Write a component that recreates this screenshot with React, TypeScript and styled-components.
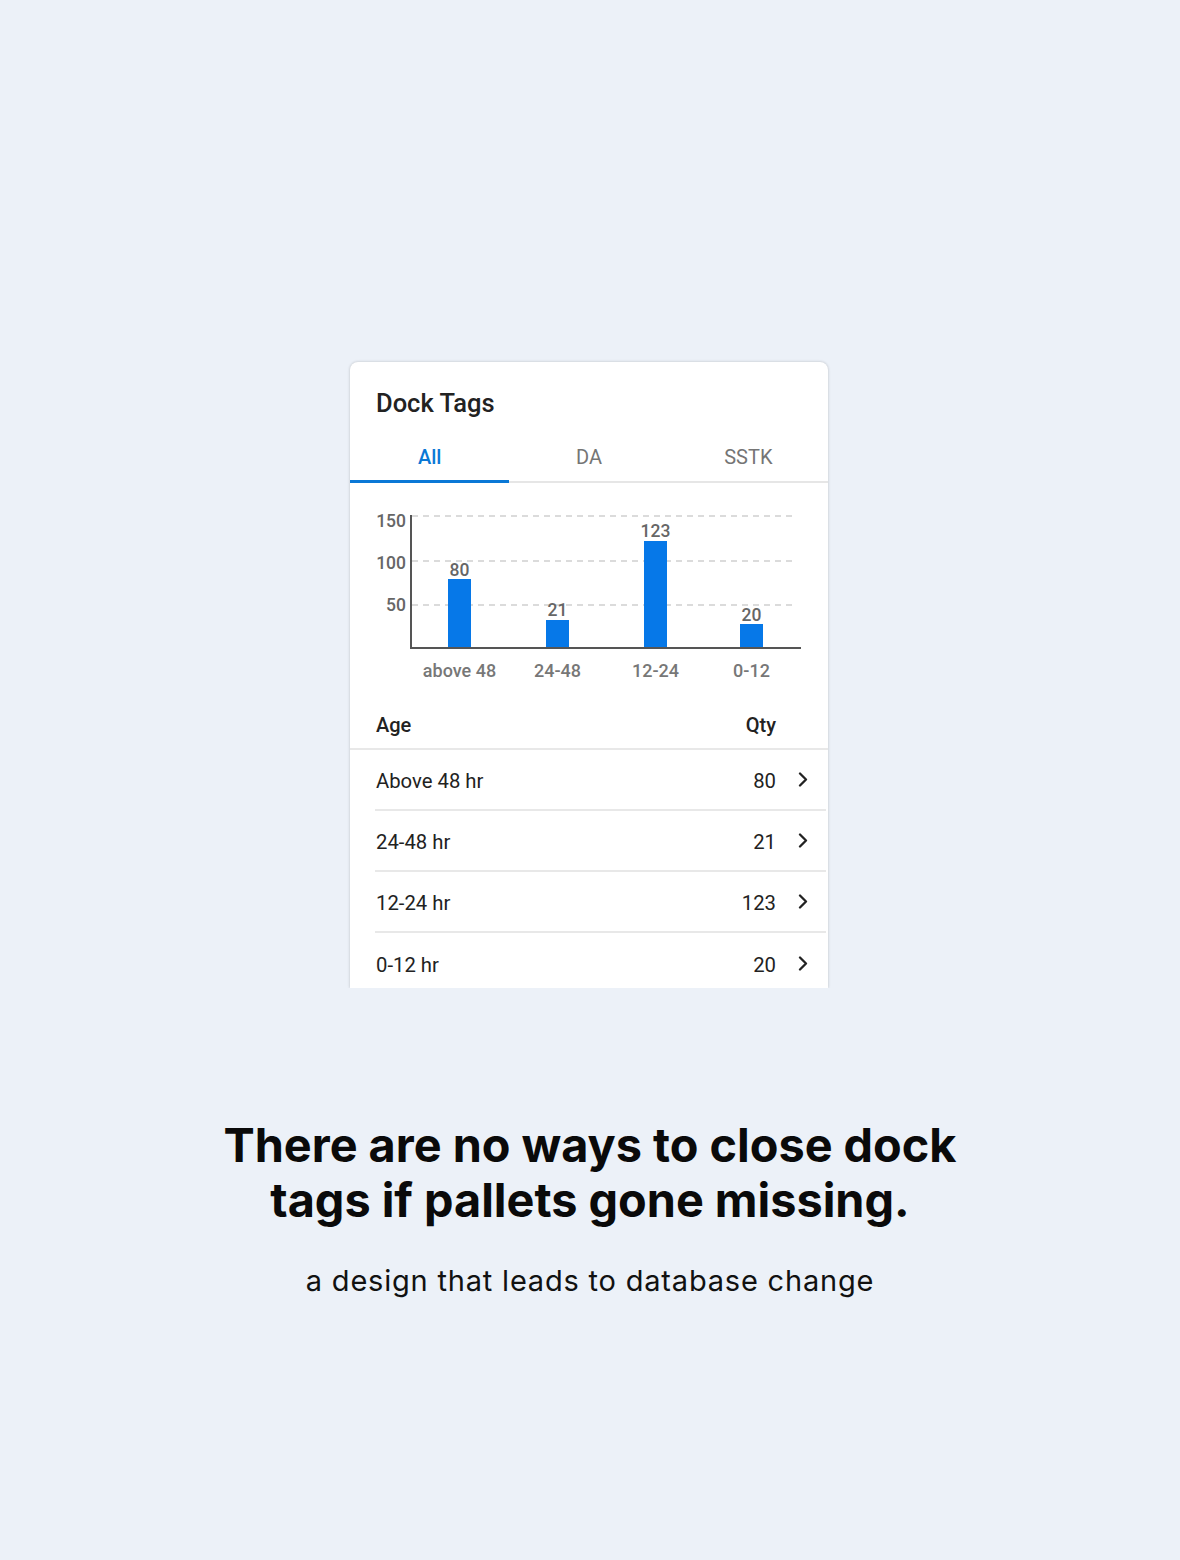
import React from "react";
import styled, { createGlobalStyle } from "styled-components";

const GlobalStyle = createGlobalStyle`
  html, body { margin: 0; padding: 0; }
  body {
    background: #ecf1f8;
    font-family: Roboto, "Liberation Sans", sans-serif;
  }
  * { box-sizing: border-box; }
`;

const Page = styled.main`
  min-height: 1560px;
  display: flex;
  flex-direction: column;
  align-items: center;
  padding-top: 362px;
`;

const Card = styled.section`
  width: 478px;
  height: 626px;
  margin-left: -2px;
  overflow: hidden;
  background: #ffffff;
  border-radius: 8px 8px 0 0;
  box-shadow: 0 0 3px rgba(0, 0, 0, 0.22);
  clip-path: inset(-6px -6px 0 -6px);
  display: flex;
  flex-direction: column;
`;

const Title = styled.h2`
  margin: 0;
  padding: 25px 26px 0;
  font-size: 25.5px;
  line-height: 33px;
  font-weight: 500;
  color: #222222;
`;

const Tabs = styled.nav`
  margin-top: 13px;
  display: grid;
  grid-template-columns: repeat(3, 1fr);
  border-bottom: 2px solid #e6e6e6;
`;

const Tab = styled.div<{ $active?: boolean }>`
  position: relative;
  height: 48px;
  display: flex;
  align-items: center;
  justify-content: center;
  font-size: 20px;
  font-weight: ${(p) => (p.$active ? 500 : 400)};
  color: ${(p) => (p.$active ? "#0a78d6" : "#757575")};
  &::after {
    content: "";
    display: ${(p) => (p.$active ? "block" : "none")};
    position: absolute;
    left: 0;
    right: 0;
    bottom: -2px;
    height: 3px;
    background: #0a78d6;
  }
`;

const ChartSvg = styled.svg`
  display: block;
  flex: none;
  margin-top: 1px;
`;

const TableHead = styled.div`
  flex: none;
  height: 48px;
  display: flex;
  align-items: center;
  justify-content: space-between;
  padding: 0 52px 0 26px;
  border-bottom: 2px solid #e8e8e8;
  font-size: 20px;
  font-weight: 500;
  color: #222222;
`;

const Row = styled.div<{ $last?: boolean }>`
  flex: none;
  height: 61px;
  margin: 0 2px 0 25px;
  padding: 3px 18px 0 1px;
  display: flex;
  align-items: center;
  border-bottom: ${(p) => (p.$last ? "none" : "2px solid #e8e8e8")};
  font-size: 20.3px;
  color: #222222;
`;

const RowLabel = styled.span`
  flex: 1;
`;

const RowQty = styled.span`
  text-align: right;
`;

const Chevron = styled.svg`
  margin-left: 22px;
  margin-top: -3px;
  flex: none;
`;

const Heading = styled.h1`
  margin: 130px 0 0;
  font-family: Inter, "Liberation Sans", sans-serif;
  font-size: 46.8px;
  line-height: 55px;
  font-weight: 700;
  color: #0a0a0a;
  text-align: center;
  letter-spacing: 0;
`;

const Subtitle = styled.p`
  margin: 35px 0 0;
  font-family: Inter, "Liberation Sans", sans-serif;
  font-size: 29px;
  line-height: 36px;
  font-weight: 400;
  color: #111111;
  text-align: center;
  letter-spacing: 0.8px;
`;

const bars = [
  { label: "above 48", value: 80, x: 98, top: 95, valueBase: 92 },
  { label: "24-48", value: 21, x: 196, top: 136, valueBase: 132 },
  { label: "12-24", value: 123, x: 294, top: 57, valueBase: 53 },
  { label: "0-12", value: 20, x: 390, top: 140, valueBase: 137 },
];

const grid = [
  { label: "150", y: 32, base: 43 },
  { label: "100", y: 77, base: 85 },
  { label: "50", y: 121, base: 127 },
];

const rows = [
  { age: "Above 48 hr", qty: 80 },
  { age: "24-48 hr", qty: 21 },
  { age: "12-24 hr", qty: 123 },
  { age: "0-12 hr", qty: 20 },
];

const BAR_W = 23;
const AXIS_Y = 164;

function Chart() {
  return (
    <ChartSvg width={478} height={218} viewBox="0 0 478 218">
      {grid.map((g) => (
        <g key={g.label}>
          <line
            x1={62}
            x2={446}
            y1={g.y}
            y2={g.y}
            stroke="#cfcfcf"
            strokeWidth={1.3}
            strokeDasharray="6 5"
          />
          <text
            x={56}
            y={g.base}
            textAnchor="end"
            fontSize={17.5}
            fontWeight={500}
            fill="#666666"
            fontFamily="Roboto, sans-serif"
          >
            {g.label}
          </text>
        </g>
      ))}
      {bars.map((b) => (
        <g key={b.label}>
          <rect x={b.x} y={b.top} width={BAR_W} height={AXIS_Y - b.top} fill="#0678e8" />
          <text
            x={b.x + BAR_W / 2}
            y={b.valueBase}
            textAnchor="middle"
            fontSize={17.5}
            fontWeight={500}
            fill="#666666"
            fontFamily="Roboto, sans-serif"
          >
            {b.value}
          </text>
          <text
            x={b.x + BAR_W / 2}
            y={193}
            textAnchor="middle"
            fontSize={18}
            fontWeight={500}
            fill="#777777"
            fontFamily="Roboto, sans-serif"
          >
            {b.label}
          </text>
        </g>
      ))}
      <line x1={61} x2={61} y1={31} y2={165} stroke="#555555" strokeWidth={2} />
      <line x1={60} x2={451} y1={AXIS_Y} y2={AXIS_Y} stroke="#555555" strokeWidth={2} />
    </ChartSvg>
  );
}

export default function App() {
  return (
    <>
      <GlobalStyle />
      <Page>
        <Card>
          <Title>Dock Tags</Title>
          <Tabs>
            <Tab $active>All</Tab>
            <Tab>DA</Tab>
            <Tab>SSTK</Tab>
          </Tabs>
          <Chart />
          <TableHead>
            <span>Age</span>
            <span>Qty</span>
          </TableHead>
          {rows.map((r, i) => (
            <Row key={r.age} $last={i === rows.length - 1}>
              <RowLabel>{r.age}</RowLabel>
              <RowQty>{r.qty}</RowQty>
              <Chevron width={10} height={15} viewBox="0 0 10 15">
                <path
                  d="M2 1.5 L8 7.5 L2 13.5"
                  fill="none"
                  stroke="#222222"
                  strokeWidth={2.3}
                  strokeLinecap="round"
                  strokeLinejoin="round"
                />
              </Chevron>
            </Row>
          ))}
        </Card>
        <Heading>
          There are no ways to close dock
          <br />
          tags if pallets gone missing.
        </Heading>
        <Subtitle>a design that leads to database change</Subtitle>
      </Page>
    </>
  );
}
